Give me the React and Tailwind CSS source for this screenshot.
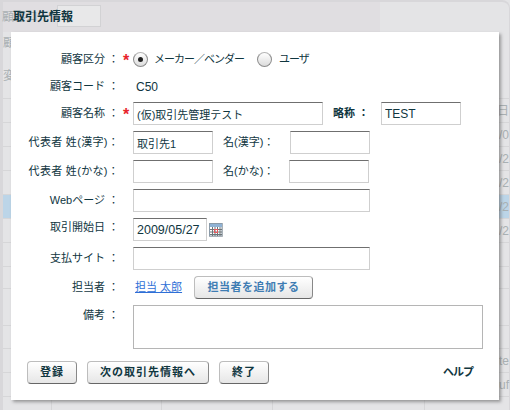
import React from 'react';

const jp = 'font-["Liberation_Sans","Noto_Sans_CJK_JP",sans-serif]';

function Req() {
  return <span className="text-[16px] leading-none font-bold text-[#e8242c]">*</span>;
}

function Label({ children, req }) {
  return (
    <div className="flex w-[122px] shrink-0 items-center">
      <span className="w-[108px] shrink-0 text-right whitespace-nowrap">{children}</span>
      <span className="flex w-[14px] justify-start pl-[4px] pt-[3px]">{req && <Req />}</span>
    </div>
  );
}

function Field({ width, value, size = 'text-[11px]' }) {
  return (
    <input
      readOnly
      value={value || ''}
      className={`${width} ${size} h-[23px] shrink-0 border border-[#cfcfcf] border-t-[#6f6f6f] bg-white px-[3px] text-[#10363f] outline-none`}
    />
  );
}

function Radio({ checked }) {
  return (
    <span className="flex h-[15px] w-[15px] shrink-0 items-center justify-center rounded-full border border-[#8c8c8c] border-t-[#b5b5b5] bg-gradient-to-b from-white to-[#dcdcdc]">
      {checked && <span className="h-[5px] w-[5px] rounded-full bg-[#222]" />}
    </span>
  );
}

function Btn({ width, blue, children }) {
  return (
    <button
      className={`${width} h-[23px] shrink-0 rounded-[4px] border border-[#bdbdbd] border-b-[#666] border-r-[#888] bg-gradient-to-b from-white to-[#e6e6e6] text-[11px] font-bold ${blue ? 'tracking-[0.5px] text-[#3f7db3]' : 'tracking-[1px] text-[#10363f]'}`}
    >
      {children}
    </button>
  );
}

function CalendarIcon() {
  return (
    <svg width="14" height="14" viewBox="0 0 14 14" className="ml-[2px] shrink-0">
      <rect x="0" y="0" width="14" height="14" fill="#c9c9c9" />
      <rect x="0.5" y="0.5" width="12.5" height="12.5" fill="#fff" stroke="#8a9aa8" />
      <rect x="1" y="1" width="12" height="3" fill="#8fb2d4" />
      <path d="M1 6.5H13M1 9H13M1 11.5H13M3.5 4V13M6 4V13M8.5 4V13M11 4V13" stroke="#6d7478" strokeWidth="1" />
      <rect x="5.5" y="6.5" width="3" height="3" fill="none" stroke="#e8585c" />
    </svg>
  );
}

// 背面の一覧（薄く見えている部分）
const bgRows = [
  { h: 'h-[24px]', cell: '日' },
  { h: 'h-[24px]', cell: '/0' },
  { h: 'h-[24px]', cell: '/2' },
  { h: 'h-[24px]', cell: '/2' },
  { h: 'h-[24px]', cell: '/2', active: true },
  { h: 'h-[24px]', cell: '/2' },
  { h: 'h-[24px]', cell: '' },
  { h: 'h-[22px]', cell: '' },
  { h: 'h-[37px]', cell: '' },
  { h: 'h-[23px]', cell: '' },
  { h: 'h-[24px]', cell: 'te' },
  { h: 'h-[24px]', cell: 'ruf' },
];

export default function App() {
  return (
    <div className={`relative h-[410px] w-[510px] overflow-hidden bg-[#e4e4e6] text-[11px] text-[#10363f] ${jp}`}>
      {/* 背面 */}
      <div className="h-full w-full rounded-tr-[8px] border-t-2 border-r border-l-[3px] border-[#d8d7da] text-[#a9b0b3]">
        <div className="flex h-[30px]">
          <div className="relative w-[377px] bg-[#e0dee1]">
            <span className="absolute top-[6px] left-[-1px] text-[12px]">顧客コード</span>
            <div className="absolute top-[3px] left-[54px] h-[22px] w-[44px] border border-[#d2d2d4] bg-[#e8e8e9]" />
            <span className="absolute top-[6px] left-[10px] text-[12px] font-bold text-[#10363f]">取引先情報</span>
          </div>
        </div>
        <div className="h-[35px] pt-[2px] text-[12px]">顧</div>
        <div className="h-[32px] border-b border-[#d6d6d8] text-[12px]">変更</div>
        {bgRows.map((row, i) => (
          <div
            key={i}
            className={`${row.h} flex items-center justify-end border-b border-[#d6d6d8] text-[12px] ${row.active ? 'bg-[#bcd5e8]' : ''}`}
          >
            {row.cell}
          </div>
        ))}
        <div className="flex h-[13px]">
          <div className="w-[49px] border-r border-[#d6d6d8]" />
          <div className="w-[110px] border-r border-[#d6d6d8]" />
          <div className="w-[111px] border-r border-[#d6d6d8]" />
          <div className="w-[152px] border-r border-[#d6d6d8]" />
        </div>
      </div>

      {/* ダイアログ */}
      <div className="absolute top-[32px] left-[11px] h-[368px] w-[488px] bg-white pt-[16px] shadow-[2px_2px_3px_rgba(90,90,90,0.55)]">
        <div className="flex h-[23px] items-center">
          <Label req>顧客区分 ：</Label>
          <Radio checked />
          <span className="ml-[6px] w-[103px] tracking-[-1px] whitespace-nowrap">メーカー／ベンダー</span>
          <Radio />
          <span className="ml-[7px] tracking-[-1px]">ユーザ</span>
        </div>

        <div className="mt-[4px] flex h-[23px] items-center">
          <Label>顧客コード ：</Label>
          <span className="pl-[3px] text-[12px]">C50</span>
        </div>

        <div className="mt-[4px] flex h-[23px] items-center">
          <Label req>顧客名称 ：</Label>
          <Field width="w-[190px]" value="(仮)取引先管理テスト" />
          <span className="ml-[10px] w-[48px] font-bold">略称 ：</span>
          <Field width="w-[80px]" size="text-[12px]" value="TEST" />
        </div>

        <div className="mt-[6px] flex h-[23px] items-center">
          <Label><span className="tracking-[0.3px]">代表者 姓(漢字)：</span></Label>
          <Field width="w-[80px]" value="取引先1" />
          <span className="ml-[10px] w-[67px]">名(漢字)：</span>
          <Field width="w-[80px]" />
        </div>

        <div className="mt-[6px] flex h-[23px] items-center">
          <Label><span className="tracking-[0.3px]">代表者 姓(かな)：</span></Label>
          <Field width="w-[80px]" />
          <span className="ml-[10px] w-[66px]">名(かな)：</span>
          <Field width="w-[80px]" />
        </div>

        <div className="mt-[6px] flex h-[23px] items-center">
          <Label>Webページ ：</Label>
          <Field width="w-[237px]" />
        </div>

        <div className="mt-[6px] flex h-[23px] items-center">
          <div className="pb-[4px]"><Label>取引開始日 ：</Label></div>
          <Field width="w-[74px]" size="text-[12.5px]" value="2009/05/27" />
          <CalendarIcon />
        </div>

        <div className="mt-[6px] flex h-[23px] items-center">
          <Label>支払サイト ：</Label>
          <Field width="w-[237px]" />
        </div>

        <div className="mt-[6px] flex h-[23px] items-center">
          <Label>担当者 ：</Label>
          <span className="w-[61px] pl-[2px] text-[#2f6fd6] underline">担当 太郎</span>
          <Btn width="w-[119px]" blue>担当者を追加する</Btn>
        </div>

        <div className="mt-[6px] flex h-[44px] items-start">
          <div className="pt-[2px]"><Label>備考 ：</Label></div>
          <textarea readOnly className="h-[44px] w-[350px] resize-none border border-[#b5b5b5] bg-white outline-none" />
        </div>

        <div className="mt-[12px] flex items-center pl-[16px]">
          <Btn width="w-[50px]">登録</Btn>
          <span className="ml-[10px]" />
          <Btn width="w-[122px]">次の取引先情報へ</Btn>
          <span className="ml-[10px]" />
          <Btn width="w-[50px]">終了</Btn>
          <span className="ml-[174px] font-bold tracking-[-1px]">ヘルプ</span>
        </div>
      </div>
    </div>
  );
}
